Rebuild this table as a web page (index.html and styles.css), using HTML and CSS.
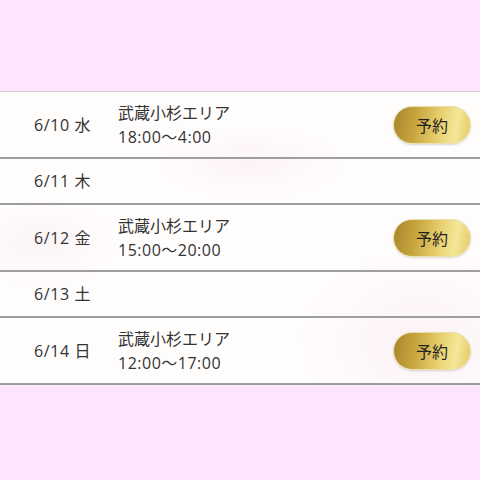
FILE: index.html
```html
<!DOCTYPE html>
<html lang="ja">
<head>
<meta charset="utf-8">
<link rel="stylesheet" href="styles.css">
</head>
<body>
<div class="top"></div>
<div class="list">
  <div class="row tall">
    <div class="date">6/10 水</div>
    <div class="info"><div>武蔵小杉エリア</div><div class="time">18:00～4:00</div></div>
    <div class="btn">予約</div>
  </div>
  <div class="row short">
    <div class="date">6/11 木</div>
  </div>
  <div class="row tall">
    <div class="date">6/12 金</div>
    <div class="info"><div>武蔵小杉エリア</div><div class="time">15:00～20:00</div></div>
    <div class="btn">予約</div>
  </div>
  <div class="row short">
    <div class="date">6/13 土</div>
  </div>
  <div class="row tall">
    <div class="date">6/14 日</div>
    <div class="info"><div>武蔵小杉エリア</div><div class="time">12:00～17:00</div></div>
    <div class="btn">予約</div>
  </div>
</div>
</body>
</html>
```
FILE: styles.css
```css
html, body {
  margin: 0;
  padding: 0;
  background: #fde6fd;
  font-family: "Open Sans", "Noto Sans CJK JP", sans-serif;
  color: #333;
}
.top {
  height: 91px;
}
.list {
  border-top: 1px solid #d9cdd6;
  background:
    radial-gradient(ellipse 130px 50px at 250px 70px, rgba(250,232,238,0.45), rgba(255,255,255,0) 70%),
    radial-gradient(ellipse 170px 130px at 420px 250px, rgba(250,234,240,0.55), rgba(255,255,255,0) 70%),
    radial-gradient(ellipse 110px 60px at 40px 150px, rgba(248,234,238,0.45), rgba(255,255,255,0) 70%),
    #fffcfc;
}
.row {
  display: flex;
  align-items: center;
  border-bottom: 2px solid #9e9e9e;
  box-sizing: border-box;
  padding-left: 34px;
  padding-right: 9px;
  font-size: 16px;
  line-height: 24px;
}
.tall { height: 67px; }
.short { height: 46px; }
.date {
  width: 84px;
  flex: none;
  letter-spacing: 0.6px;
}
.info {
  flex: 1;
}
.time {
  letter-spacing: 0.5px;
}
.btn {
  width: 78px;
  height: 38px;
  box-sizing: border-box;
  border-radius: 19px;
  border: 1px solid #eadfae;
  background: linear-gradient(100deg, #a7852a 0%, #c9a73f 30%, #e9d171 60%, #f5e79a 80%, #e3c960 100%);
  display: flex;
  align-items: center;
  justify-content: center;
  color: #222;
  font-family: "Noto Sans CJK JP", sans-serif;
  font-size: 16px;
  box-shadow: 0 1px 2px rgba(0,0,0,0.15);
}
```
